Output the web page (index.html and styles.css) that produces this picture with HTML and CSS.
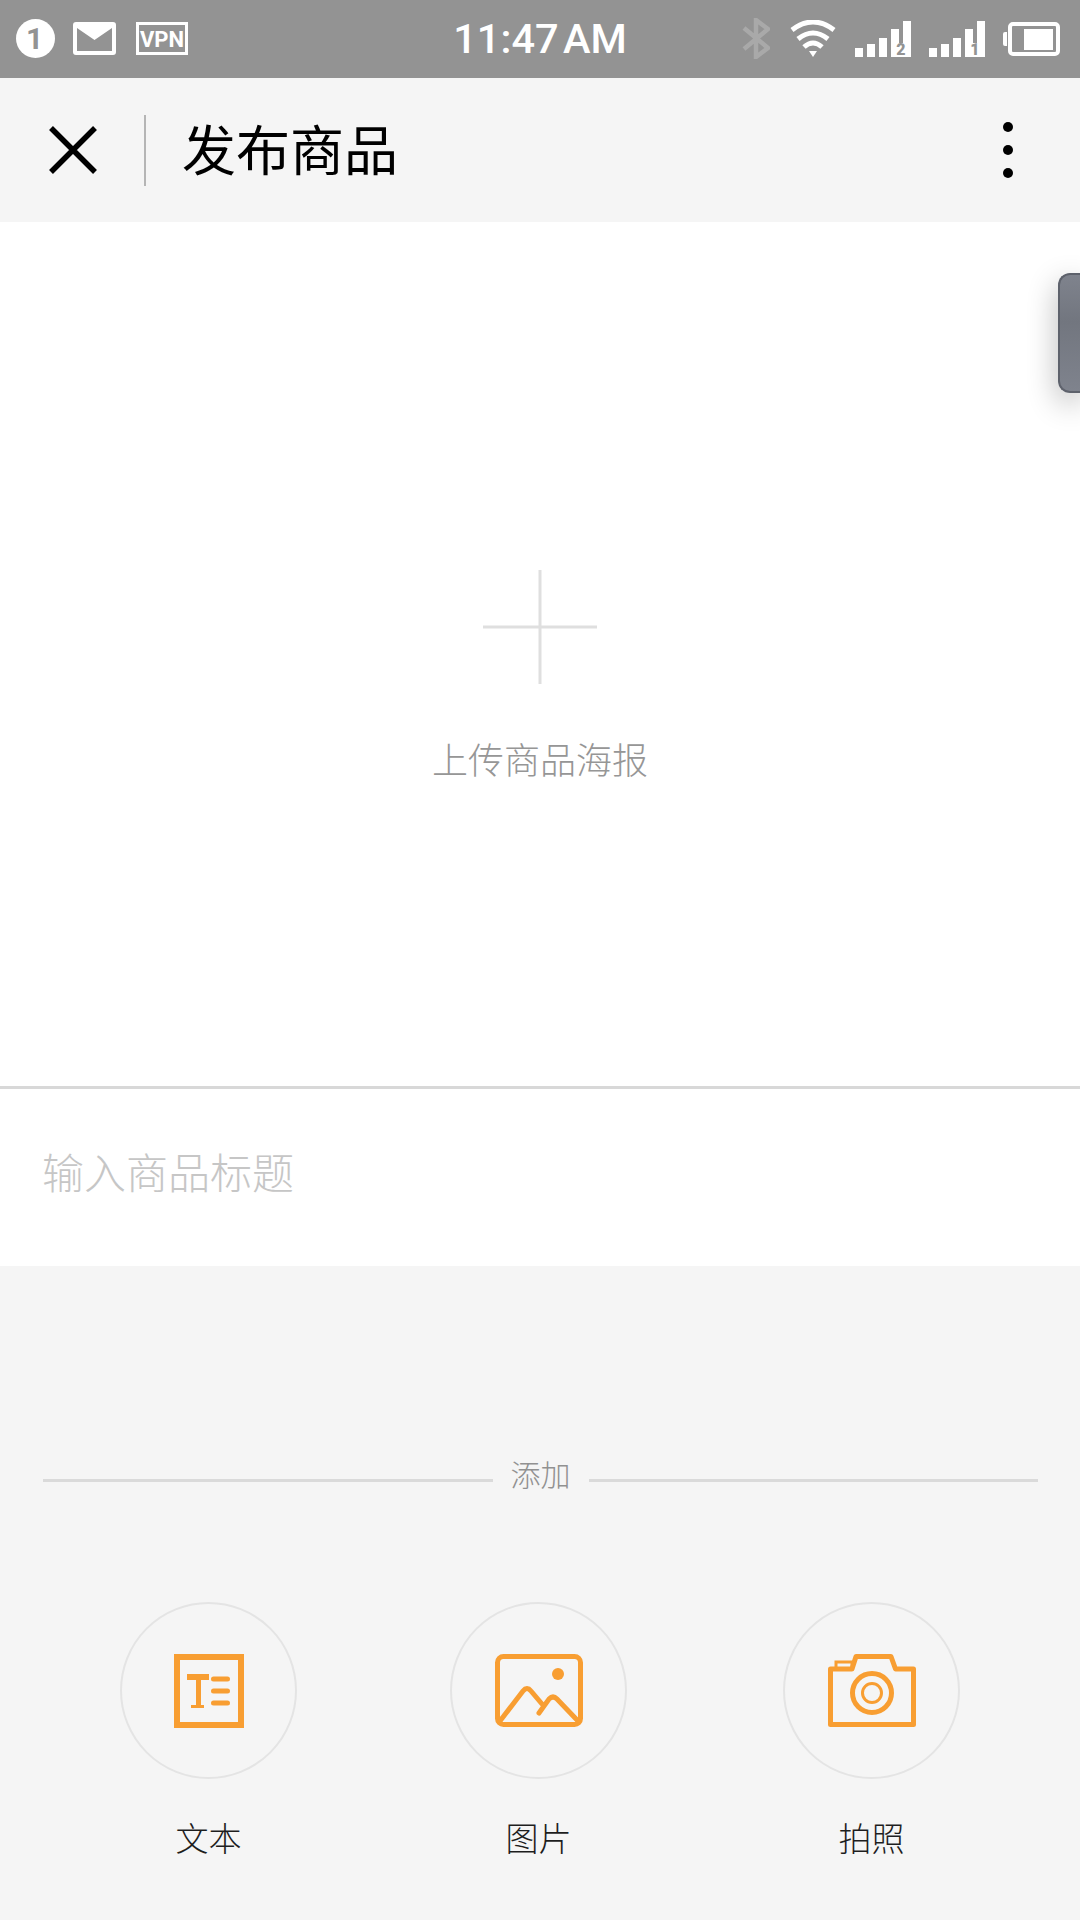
FILE: index.html
```html
<!DOCTYPE html>
<html lang="zh-CN">
<head>
    <meta charset="UTF-8">
    <meta name="viewport" content="width=device-width, initial-scale=1.0">
    <title>发布商品</title>
    <link rel="stylesheet" href="styles.css">
</head>
<body>
    <div class="status-bar">
        <div class="status-left">
            <svg class="ic-badge" width="39" height="39" viewBox="0 0 39 39">
                <circle cx="19.5" cy="19.5" r="19.5" fill="#fff"/>
                <text x="18.5" y="30" text-anchor="middle" class="badge-num">1</text>
            </svg>
            <svg class="ic-mail" width="43" height="33" viewBox="0 0 43 33">
                <path fill="#fff" fill-rule="evenodd" d="M3 0H40A3 3 0 0 1 43 3V30A3 3 0 0 1 40 33H3A3 3 0 0 1 0 30V3A3 3 0 0 1 3 0ZM4 6V29H39V6L21.5 18Z"/>
            </svg>
            <svg class="ic-vpn" width="52" height="33" viewBox="0 0 52 33">
                <rect x="1.5" y="1.5" width="49" height="30" fill="none" stroke="#fff" stroke-width="3"/>
                <text x="26" y="24.5" text-anchor="middle" class="vpn-text">VPN</text>
            </svg>
        </div>
        <div class="status-time">11:47 AM</div>
        <div class="status-right">
            <svg class="ic-bt" width="28" height="41" viewBox="0 0 28 41">
                <path d="M2 10L26 30L14 39V2L26 11L2 31" fill="none" stroke="#a9a9a9" stroke-width="4.5"/>
            </svg>
            <svg class="ic-wifi" width="46" height="37" viewBox="0 0 46 37">
                <path d="M2 10Q23 -6 44 10" fill="none" stroke="#fff" stroke-width="5"/>
                <path d="M8 19Q23 7 38 19" fill="none" stroke="#fff" stroke-width="5"/>
                <path d="M14 27Q23 19 32 27" fill="none" stroke="#fff" stroke-width="5"/>
                <path d="M19 31H27L23 37Z" fill="#fff"/>
            </svg>
            <svg class="ic-signal" width="56" height="44" viewBox="0 -4 56 44">
                <path fill="#fff" d="M0 27H8V36H0ZM12 23H20V36H12ZM24 17H32V36H24ZM36 8H44V22H48V0H56V36H36Z"/>
                <text x="46" y="34" text-anchor="middle" class="sim-num">2</text>
            </svg>
            <svg class="ic-signal" width="56" height="44" viewBox="0 -4 56 44">
                <path fill="#fff" d="M0 27H8V36H0ZM12 23H20V36H12ZM24 17H32V36H24ZM36 8H44V22H48V0H56V36H36Z"/>
                <text x="46" y="34" text-anchor="middle" class="sim-num">1</text>
            </svg>
            <svg width="57" height="34" viewBox="0 0 57 34">
                <path fill="#fff" d="M0 12A2 2 0 0 1 2 10H4V24H2A2 2 0 0 1 0 22Z"/>
                <rect x="7" y="2" width="48" height="30" rx="3" fill="none" stroke="#fff" stroke-width="4"/>
                <rect x="21" y="7" width="29" height="21" fill="#fff"/>
            </svg>
        </div>
    </div>

    <div class="nav-bar">
        <svg class="nav-close" width="48" height="48" viewBox="0 0 48 48">
            <path d="M2 2L46 46M46 2L2 46" fill="none" stroke="#000" stroke-width="5.500"/>
        </svg>
        <div class="nav-line"></div>
        <h1 class="nav-title">发布商品</h1>
        <div class="nav-more">
            <span></span>
            <span></span>
            <span></span>
        </div>
    </div>

    <div class="poster">
        <svg width="114" height="114" viewBox="0 0 114 114">
            <path d="M57 0V114M0 57H114" fill="none" stroke="#dfdfdf" stroke-width="3"/>
        </svg>
        <p class="poster-text">上传商品海报</p>
    </div>

    <div class="title-row">输入商品标题</div>

    <div class="add-area">
        <div class="divider">
            <div class="divider-line"></div>
            <span class="divider-text">添加</span>
            <div class="divider-line"></div>
        </div>
        <div class="add-grid">
            <div class="add-item">
                <div class="add-circle">
                    <svg width="70" height="74" viewBox="0 0 70 74">
                        <rect x="3" y="3" width="64" height="68" fill="none" stroke="#f89e32" stroke-width="6"/>
                        <path fill="#f89e32" d="M13 20H35V26H27V51H30V54H17V51H22V26H13Z"/>
                        <path d="M39.500 25H53.500M39.500 37H53.500M39.500 49H53.500" fill="none" stroke="#f89e32" stroke-width="5" stroke-linecap="round"/>
                    </svg>
                </div>
                <span class="add-label">文本</span>
            </div>
            <div class="add-item">
                <div class="add-circle">
                    <svg width="88" height="73" viewBox="0 0 88 73">
                        <rect x="2.500" y="2.500" width="83" height="68" rx="6" fill="none" stroke="#f89e32" stroke-width="5"/>
                        <circle cx="63" cy="20" r="6" fill="#f89e32"/>
                        <path d="M5 67L28 37Q32 32 36 37L47 50M44 59L54 45Q58 41 62 45L83 67" fill="none" stroke="#f89e32" stroke-width="5" stroke-linecap="round"/>
                    </svg>
                </div>
                <span class="add-label">图片</span>
            </div>
            <div class="add-item">
                <div class="add-circle">
                    <svg width="88" height="73" viewBox="0 0 88 73">
                        <path d="M2.500 70.500V15H24L28 2.500H63L67.500 15H85.500V70.500Z" fill="none" stroke="#f89e32" stroke-width="5" stroke-linejoin="round"/>
                        <rect x="8" y="8" width="16" height="7" fill="none" stroke="#f89e32" stroke-width="3"/>
                        <circle cx="44" cy="39" r="19.500" fill="none" stroke="#f89e32" stroke-width="5"/>
                        <circle cx="44" cy="39" r="9.500" fill="none" stroke="#f89e32" stroke-width="3"/>
                    </svg>
                </div>
                <span class="add-label">拍照</span>
            </div>
        </div>
    </div>

    <div class="side-tab"></div>
</body>
</html>
```

FILE: styles.css
```css
* {
    margin: 0;
    padding: 0;
    box-sizing: border-box;
    font-family: "Noto Sans CJK SC", "Noto Sans", sans-serif;
}

body {
    position: relative;
    width: 1080px;
    height: 1920px;
    display: flex;
    flex-direction: column;
    background-color: #f5f5f5;
    overflow: hidden;
}

/* status bar */
.status-bar {
    height: 78px;
    display: grid;
    grid-template-columns: 1fr auto 1fr;
    align-items: center;
    padding: 0 20px 1px 16px;
    background-color: #939393;
}

.status-left,
.status-right {
    display: flex;
    align-items: center;
    gap: 18px;
}

.status-right {
    justify-content: flex-end;
}

.ic-vpn {
    margin-left: 2px;
}

.ic-bt {
    margin-right: 2px;
}

.ic-wifi {
    margin-right: 1px;
}

.status-time {
    font-family: Roboto, sans-serif;
    font-size: 41.5px;
    font-weight: 500;
    word-spacing: -6px;
    color: white;
    margin-left: 4px;
}

.badge-num {
    font-family: Roboto, sans-serif;
    font-size: 30px;
    font-weight: 700;
    fill: #939393;
}

.vpn-text {
    font-family: Roboto, sans-serif;
    font-size: 22px;
    font-weight: 700;
    fill: #fff;
}

.sim-num {
    font-family: Roboto, sans-serif;
    font-size: 16px;
    font-weight: 900;
    fill: #939393;
}

/* nav bar */
.nav-bar {
    height: 144px;
    display: flex;
    align-items: center;
    padding-left: 49px;
    background-color: #f5f5f5;
}

.nav-line {
    width: 2px;
    height: 71px;
    margin-left: 47px;
    background-color: #b5b5b5;
}

.nav-title {
    margin-left: 36px;
    margin-bottom: 6px;
    font-size: 54px;
    font-weight: 400;
    color: #000;
}

.nav-more {
    margin-left: auto;
    margin-right: 67px;
    display: flex;
    flex-direction: column;
    gap: 13px;
}

.nav-more span {
    width: 10px;
    height: 10px;
    border-radius: 50%;
    background-color: #000;
}

/* poster */
.poster {
    height: 867px;
    display: flex;
    flex-direction: column;
    align-items: center;
    padding-top: 348px;
    background-color: white;
    border-bottom: 3px solid #d8d8d8;
}

.poster-text {
    margin-top: 49px;
    font-size: 36px;
    font-weight: 300;
    line-height: 50px;
    color: #969696;
}

.title-row {
    height: 177px;
    display: flex;
    align-items: center;
    padding-left: 42px;
    padding-bottom: 14px;
    font-size: 42px;
    font-weight: 300;
    color: #c6c6c6;
    background-color: white;
}

/* add section */
.add-area {
    flex: 1;
    padding-top: 199px;
}

.divider {
    display: flex;
    align-items: center;
    padding: 0 42px 0 43px;
}

.divider-line {
    flex: 1;
    height: 3px;
    background-color: #dadada;
}

.divider-text {
    padding: 0 18px;
    margin-top: -14px;
    font-size: 30px;
    font-weight: 300;
    line-height: 44px;
    color: #919191;
}

.add-grid {
    display: grid;
    grid-template-columns: 330px 333px 177px;
    padding-left: 120px;
    margin-top: 107px;
}

.add-item {
    width: 177px;
    display: flex;
    flex-direction: column;
    align-items: center;
}

.add-circle {
    width: 177px;
    height: 177px;
    display: flex;
    align-items: center;
    justify-content: center;
    border: 2px solid #e4e4e4;
    border-radius: 50%;
}

.add-label {
    margin-top: 35px;
    font-size: 33px;
    font-weight: 300;
    line-height: 46px;
    color: #1e1e1e;
}

/* floating tab on the right edge */
.side-tab {
    position: absolute;
    top: 273px;
    right: 0;
    width: 22px;
    height: 120px;
    background: linear-gradient(180deg, #7f838d 0%, #72767f 40%, #7f838d 100%);
    border: 2px solid #5e626c;
    border-right: none;
    border-radius: 12px 0 0 12px;
    box-shadow: 0 10px 30px rgba(0, 0, 0, 0.3);
}
```
